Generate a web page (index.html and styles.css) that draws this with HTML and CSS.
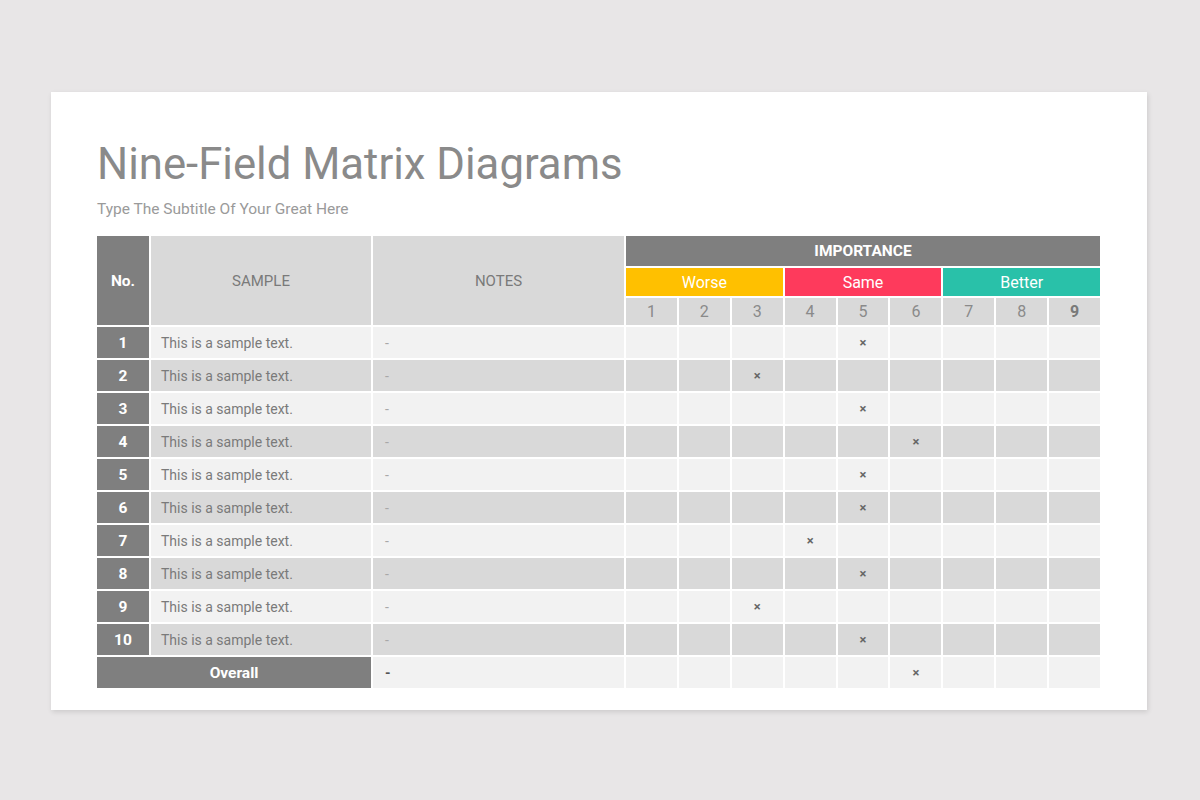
FILE: index.html
```html
<!DOCTYPE html>
<html lang="en">
<head>
<meta charset="utf-8">
<title>Nine-Field Matrix Diagrams</title>
<link rel="stylesheet" href="styles.css">
</head>
<body>
<div class="slide">
  <h1 class="title">Nine-Field Matrix Diagrams</h1>
  <p class="subtitle">Type The Subtitle Of Your Great Here</p>
  <div class="matrix">
    <div class="cell dark no-head">No.</div>
    <div class="cell head sample-head">SAMPLE</div>
    <div class="cell head notes-head">NOTES</div>
    <div class="cell dark importance">IMPORTANCE</div>
    <div class="cell band worse">Worse</div>
    <div class="cell band same">Same</div>
    <div class="cell band better">Better</div>
    <div class="cell num">1</div><div class="cell num">2</div><div class="cell num">3</div>
    <div class="cell num">4</div><div class="cell num">5</div><div class="cell num">6</div>
    <div class="cell num">7</div><div class="cell num">8</div><div class="cell num num-strong">9</div>

    <div class="cell dark idx">1</div><div class="cell light text">This is a sample text.</div><div class="cell light note">-</div>
    <div class="cell light"></div><div class="cell light"></div><div class="cell light"></div><div class="cell light"></div><div class="cell light mark">×</div><div class="cell light"></div><div class="cell light"></div><div class="cell light"></div><div class="cell light"></div>

    <div class="cell dark idx">2</div><div class="cell mid text">This is a sample text.</div><div class="cell mid note">-</div>
    <div class="cell mid"></div><div class="cell mid"></div><div class="cell mid mark">×</div><div class="cell mid"></div><div class="cell mid"></div><div class="cell mid"></div><div class="cell mid"></div><div class="cell mid"></div><div class="cell mid"></div>

    <div class="cell dark idx">3</div><div class="cell light text">This is a sample text.</div><div class="cell light note">-</div>
    <div class="cell light"></div><div class="cell light"></div><div class="cell light"></div><div class="cell light"></div><div class="cell light mark">×</div><div class="cell light"></div><div class="cell light"></div><div class="cell light"></div><div class="cell light"></div>

    <div class="cell dark idx">4</div><div class="cell mid text">This is a sample text.</div><div class="cell mid note">-</div>
    <div class="cell mid"></div><div class="cell mid"></div><div class="cell mid"></div><div class="cell mid"></div><div class="cell mid"></div><div class="cell mid mark">×</div><div class="cell mid"></div><div class="cell mid"></div><div class="cell mid"></div>

    <div class="cell dark idx">5</div><div class="cell light text">This is a sample text.</div><div class="cell light note">-</div>
    <div class="cell light"></div><div class="cell light"></div><div class="cell light"></div><div class="cell light"></div><div class="cell light mark">×</div><div class="cell light"></div><div class="cell light"></div><div class="cell light"></div><div class="cell light"></div>

    <div class="cell dark idx">6</div><div class="cell mid text">This is a sample text.</div><div class="cell mid note">-</div>
    <div class="cell mid"></div><div class="cell mid"></div><div class="cell mid"></div><div class="cell mid"></div><div class="cell mid mark">×</div><div class="cell mid"></div><div class="cell mid"></div><div class="cell mid"></div><div class="cell mid"></div>

    <div class="cell dark idx">7</div><div class="cell light text">This is a sample text.</div><div class="cell light note">-</div>
    <div class="cell light"></div><div class="cell light"></div><div class="cell light"></div><div class="cell light mark">×</div><div class="cell light"></div><div class="cell light"></div><div class="cell light"></div><div class="cell light"></div><div class="cell light"></div>

    <div class="cell dark idx">8</div><div class="cell mid text">This is a sample text.</div><div class="cell mid note">-</div>
    <div class="cell mid"></div><div class="cell mid"></div><div class="cell mid"></div><div class="cell mid"></div><div class="cell mid mark">×</div><div class="cell mid"></div><div class="cell mid"></div><div class="cell mid"></div><div class="cell mid"></div>

    <div class="cell dark idx">9</div><div class="cell light text">This is a sample text.</div><div class="cell light note">-</div>
    <div class="cell light"></div><div class="cell light"></div><div class="cell light mark">×</div><div class="cell light"></div><div class="cell light"></div><div class="cell light"></div><div class="cell light"></div><div class="cell light"></div><div class="cell light"></div>

    <div class="cell dark idx">10</div><div class="cell mid text">This is a sample text.</div><div class="cell mid note">-</div>
    <div class="cell mid"></div><div class="cell mid"></div><div class="cell mid"></div><div class="cell mid"></div><div class="cell mid mark">×</div><div class="cell mid"></div><div class="cell mid"></div><div class="cell mid"></div><div class="cell mid"></div>

    <div class="cell dark overall">Overall</div><div class="cell light note note-strong">-</div>
    <div class="cell light"></div><div class="cell light"></div><div class="cell light"></div><div class="cell light"></div><div class="cell light"></div><div class="cell light mark">×</div><div class="cell light"></div><div class="cell light"></div><div class="cell light"></div>
  </div>
</div>
</body>
</html>
```

FILE: styles.css
```css
html, body {
  margin: 0;
  padding: 0;
}
body {
  background: #e8e6e7;
  font-family: Roboto, "Liberation Sans", Arial, sans-serif;
  width: 1200px;
  height: 800px;
  overflow: hidden;
}
.slide {
  box-sizing: border-box;
  width: 1096px;
  height: 618px;
  margin: 92px 0 0 51px;
  padding: 0 47px 0 46px;
  background: #ffffff;
  box-shadow: 1px 2px 5px rgba(0, 0, 0, 0.12);
}
.title {
  margin: 0;
  padding-top: 46px;
  font-size: 43.7px;
  font-weight: 400;
  line-height: 52px;
  color: #8a8a8a;
}
.subtitle {
  margin: 9px 0 0 0;
  font-size: 15.5px;
  line-height: 20px;
  color: #9a9a9a;
}
.matrix {
  margin-top: 17px;
  display: grid;
  grid-template-columns: 52px 220px 251px repeat(9, 1fr);
  grid-template-rows: 30px 28px 27px repeat(11, 31px);
  column-gap: 2px;
  row-gap: 2px;
}
.cell {
  display: flex;
  align-items: center;
  justify-content: center;
  font-size: 14px;
  color: #777777;
}
.dark {
  background: #7f7f7f;
  color: #ffffff;
  font-weight: 700;
  font-size: 15.5px;
}
.head {
  background: #d9d9d9;
  color: #7a7a7a;
  font-size: 15px;
}
.no-head { grid-row: 1 / 4; grid-column: 1; }
.sample-head { grid-row: 1 / 4; grid-column: 2; }
.notes-head { grid-row: 1 / 4; grid-column: 3; }
.importance { grid-row: 1; grid-column: 4 / 13; }
.band {
  color: #ffffff;
  font-size: 16px;
  font-weight: 400;
}
.worse { grid-row: 2; grid-column: 4 / 7; background: #ffc000; }
.same { grid-row: 2; grid-column: 7 / 10; background: #fe3a5c; }
.better { grid-row: 2; grid-column: 10 / 13; background: #29c1a9; }
.num {
  grid-row: 3;
  background: #d9d9d9;
  color: #8a8a8a;
  font-size: 16px;
}
.num-strong { font-weight: 700; color: #7a7a7a; }
.light { background: #f2f2f2; }
.mid { background: #d9d9d9; }
.text {
  justify-content: flex-start;
  padding-left: 10px;
  color: #7a7a7a;
}
.note {
  justify-content: flex-start;
  padding-left: 12px;
  color: #a8a8a8;
}
.note-strong {
  color: #555555;
  font-weight: 700;
}
.overall { grid-column: 1 / 3; }
.mark {
  font-size: 13px;
  font-weight: 700;
  color: #666666;
}
```
